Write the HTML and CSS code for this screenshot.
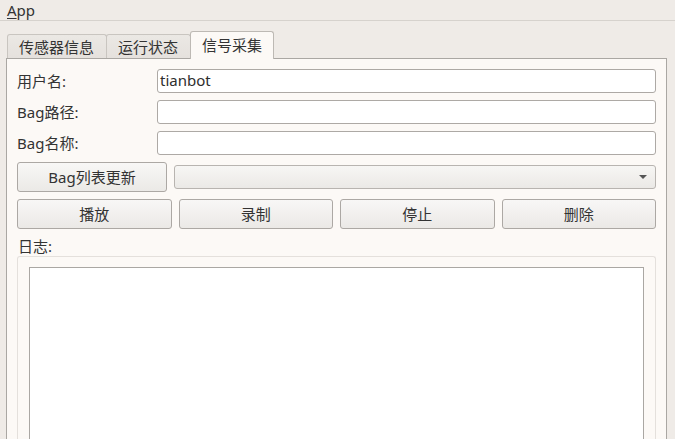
FILE: index.html
```html
<!DOCTYPE html>
<html>
<head>
<meta charset="utf-8">
<link rel="stylesheet" href="styles.css">
</head>
<body>
<div class="menubar"><span class="menu"><u>A</u>pp</span></div>
<div class="tabwidget">
  <div class="tabbar">
    <div class="tab">传感器信息</div>
    <div class="tab">运行状态</div>
    <div class="tab active">信号采集</div>
  </div>
  <div class="pane">
    <div class="form">
      <div class="label">用户名:</div>
      <div class="input">tianbot</div>
      <div class="label">Bag路径:</div>
      <div class="input"></div>
      <div class="label">Bag名称:</div>
      <div class="input"></div>
    </div>
    <div class="row combo-row">
      <div class="btn refresh">Bag列表更新</div>
      <div class="combo"><span class="arrow"></span></div>
    </div>
    <div class="row actions">
      <div class="btn">播放</div>
      <div class="btn">录制</div>
      <div class="btn">停止</div>
      <div class="btn">删除</div>
    </div>
    <div class="loglabel">日志:</div>
    <div class="logframe">
      <div class="logedit"></div>
    </div>
  </div>
</div>
</body>
</html>
```
FILE: styles.css
```css
html, body {
  margin: 0;
  padding: 0;
  height: 439px;
  overflow: hidden;
}
body {
  background: #efebe7;
  font-family: "Noto Sans", "Noto Sans CJK SC", sans-serif;
  font-size: 15px;
  color: #333;
}
.menubar {
  height: 21px;
  border-bottom: 1px solid #d6d2cd;
  box-sizing: border-box;
  padding-left: 7px;
  line-height: 20px;
}
.menu u { text-decoration: underline; text-underline-offset: 2px; }
.tabwidget {
  margin: 9px 8px 0 6px;
}
.tabbar {
  display: flex;
  align-items: flex-end;
  height: 28px;
  padding-left: 1px;
}
.tab {
  height: 24px;
  box-sizing: border-box;
  padding: 0 12px 0 11px;
  line-height: 24px;
  border: 1px solid #c9c5c0;
  border-bottom: none;
  border-radius: 3px 3px 0 0;
  background: linear-gradient(#ebe8e4, #e5e1dd);
  margin-right: -1px;
}
.tab.active {
  height: 28px;
  line-height: 27px;
  background: #fcf9f6;
  border-color: #bdb9b4;
  position: relative;
  top: 1px;
  padding: 0 11px 0 11px;
  z-index: 1;
}
.pane {
  background: #fcf9f6;
  border: 1px solid #aaa7a3;
  border-bottom: none;
  height: 381px;
  overflow: hidden;
  padding: 10px 10px 0 10px;
  box-sizing: border-box;
}
.form {
  display: grid;
  grid-template-columns: 140px 1fr;
  row-gap: 7px;
}
.label {
  height: 24px;
  line-height: 24px;
}
.input {
  height: 24px;
  box-sizing: border-box;
  background: #fff;
  border: 1px solid #ada9a5;
  border-radius: 3px;
  line-height: 21px;
  padding-left: 2px;
  color: #2e2e2e;
}
.row {
  display: flex;
  gap: 7px;
  margin-top: 7px;
}
.combo-row { align-items: center; }
.btn {
  height: 30px;
  box-sizing: border-box;
  border: 1px solid #aca8a4;
  border-radius: 3px;
  background: linear-gradient(#f8f7f6, #ebe9e6);
  text-align: center;
  line-height: 28px;
  flex: 1;
}
.btn.refresh {
  flex: 0 0 150px;
}
.combo {
  flex: 1;
  height: 24px;
  box-sizing: border-box;
  border: 1px solid #b8b4b0;
  border-radius: 3px;
  background: linear-gradient(#f7f6f4, #ebe9e6);
  position: relative;
}
.arrow {
  position: absolute;
  right: 8px;
  top: 9px;
  width: 0;
  height: 0;
  border-left: 4px solid transparent;
  border-right: 4px solid transparent;
  border-top: 4px solid #555;
}
.loglabel {
  height: 20px;
  line-height: 20px;
  margin-top: 7px;
  padding-left: 1px;
}
.logframe {
  border: 1px solid #e4e0dc;
  border-bottom: none;
  border-radius: 3px 3px 0 0;
  padding: 10px 11px 0 11px;
  height: 200px;
}
.logedit {
  background: #fff;
  border: 1px solid #aaa7a3;
  border-bottom: none;
  height: 200px;
}
```
